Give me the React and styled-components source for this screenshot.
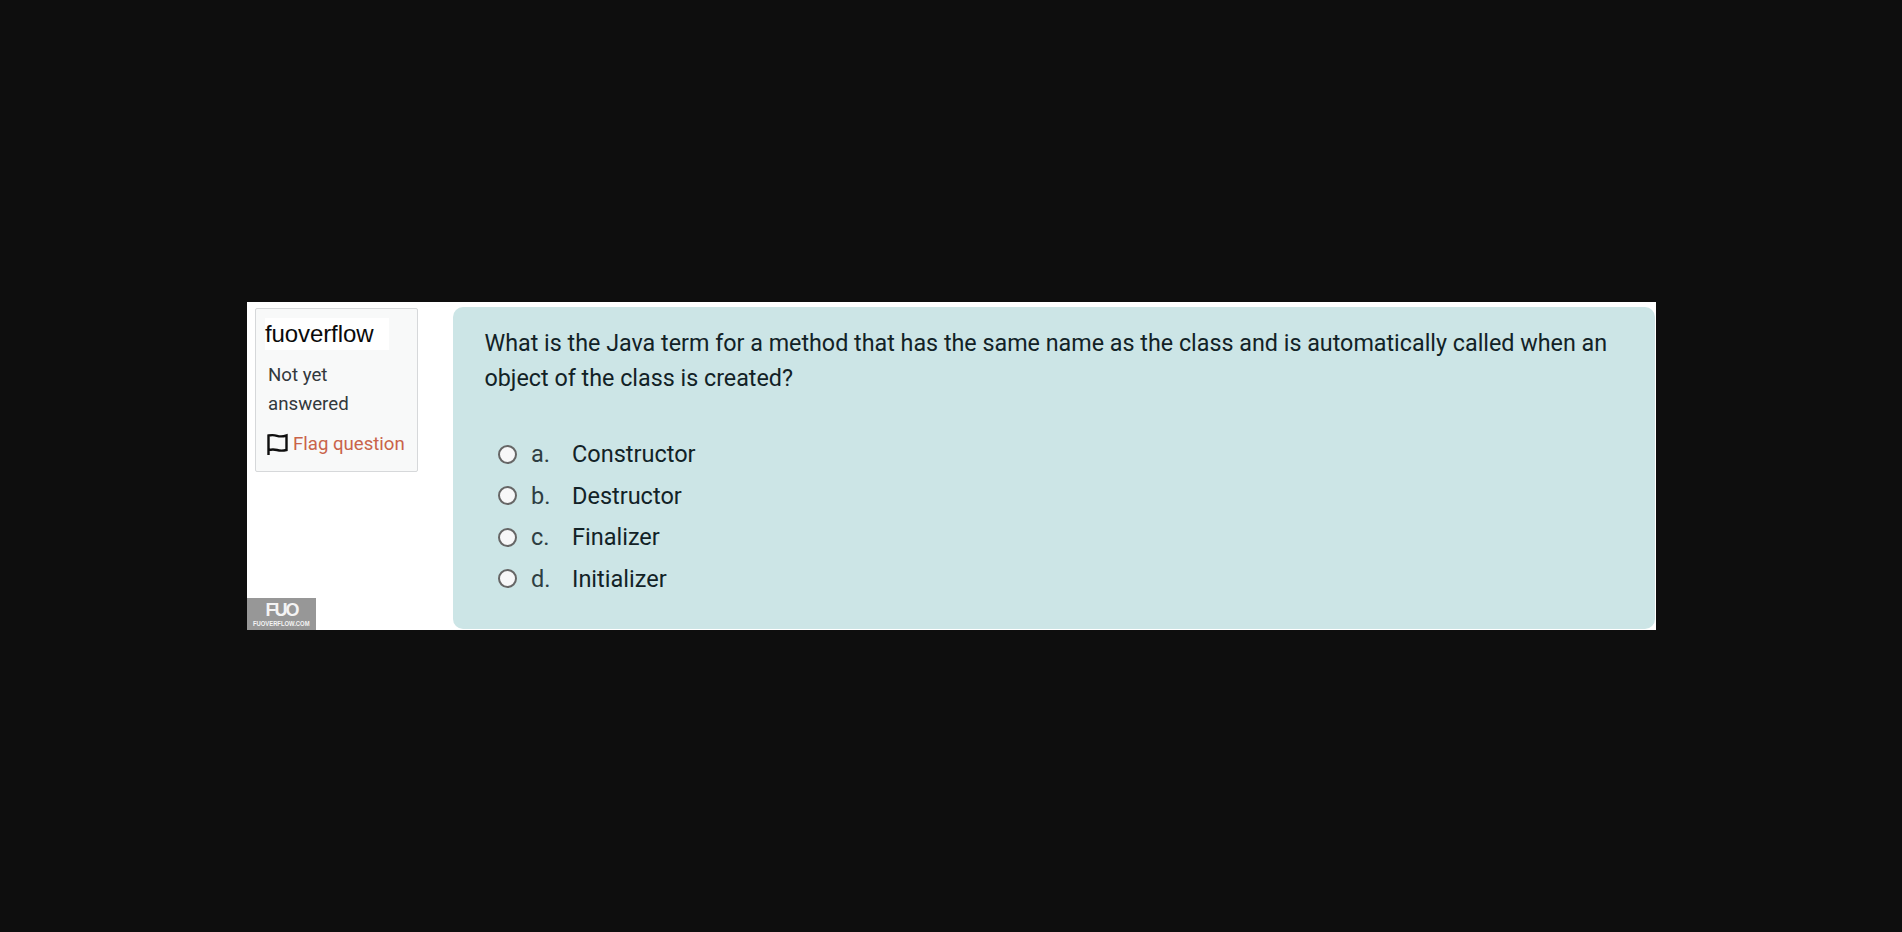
import React from "react";
import styled, { createGlobalStyle } from "styled-components";

const GlobalStyle = createGlobalStyle`
  html, body {
    margin: 0;
    padding: 0;
    height: 100%;
    background: #0e0e0e;
    font-family: Roboto, "Liberation Sans", sans-serif;
  }
`;

const Page = styled.div`
  width: 1902px;
  height: 932px;
  padding: 302px 0 0 247px;
  box-sizing: border-box;
  overflow: hidden;
`;

const Sheet = styled.div`
  position: relative;
  width: 1409px;
  height: 328px;
  background: #ffffff;
  display: flex;
  align-items: flex-start;
  box-sizing: border-box;
  padding: 5px 1px 1px 8px;
`;

const InfoBox = styled.div`
  width: 163px;
  height: 164px;
  margin-top: 1px;
  box-sizing: border-box;
  background: #f8f9f9;
  border: 1px solid #d6d8da;
  border-radius: 2px;
  padding: 9px 8px 7px 9px;
  flex-shrink: 0;
`;

const Username = styled.div`
  background: #ffffff;
  margin: 0 20px 0 0;
  font-family: "Liberation Sans", Arial, sans-serif;
  font-size: 24px;
  line-height: 32px;
  color: #0a0a0a;
  letter-spacing: -0.1px;
`;

const Status = styled.div`
  margin: 11px 0 0 3px;
  font-size: 18.7px;
  line-height: 28.5px;
  color: #33383c;
`;

const FlagRow = styled.div`
  display: flex;
  align-items: center;
  gap: 5px;
  margin: 12px 0 0 1px;
  font-size: 18.6px;
  line-height: 28px;
  color: #c9634a;
  white-space: nowrap;
`;

const FlagIcon = () => (
  <svg width="22" height="24" viewBox="0 0 22 24" fill="none" stroke="#0e0e0e" strokeWidth="2.4">
    <path d="M2.5 23V3.5C6 2.8 8.5 3 11 3.8C13.5 4.6 17 4.6 20.5 3.5V18C17 18.8 13.5 18.7 11 18C8.5 17.3 6 17.2 2.5 18" />
  </svg>
);

const QuestionPanel = styled.div`
  margin-left: 35px;
  flex: 1;
  height: 322px;
  background: #cce5e6;
  border-radius: 10px;
  box-sizing: border-box;
  padding: 19px 30px 0 31.5px;
  color: #122226;
`;

const QuestionText = styled.div`
  font-size: 23.3px;
  line-height: 35px;
`;

const Answers = styled.div`
  margin-top: 37.5px;
  margin-left: 13px;
  display: flex;
  flex-direction: column;
`;

const AnswerRow = styled.div`
  display: flex;
  align-items: center;
  height: 41.5px;
  font-size: 23.5px;
`;

const Radio = styled.span`
  width: 19px;
  height: 19px;
  box-sizing: border-box;
  border: 2px solid #666666;
  border-radius: 50%;
  background: #f7f7f8;
  margin-right: 14.5px;
  flex-shrink: 0;
`;

const Letter = styled.span`
  width: 41px;
  color: #2e3e42;
`;

const Watermark = styled.div`
  position: absolute;
  left: 0;
  bottom: 0;
  width: 69px;
  height: 32px;
  background: #979797;
  color: #f4f4f4;
  display: flex;
  flex-direction: column;
  align-items: center;
  overflow: hidden;
`;

const WatermarkLogo = styled.div`
  font-family: "Liberation Sans", Arial, sans-serif;
  font-weight: 700;
  font-size: 18px;
  line-height: 19px;
  margin-top: 3px;
  letter-spacing: -2px;
`;

const WatermarkSite = styled.div`
  font-family: "Liberation Sans", Arial, sans-serif;
  font-weight: 700;
  font-size: 7.5px;
  line-height: 8px;
  white-space: nowrap;
  transform: scaleX(0.78);
`;

const answers = [
  ["a.", "Constructor"],
  ["b.", "Destructor"],
  ["c.", "Finalizer"],
  ["d.", "Initializer"],
];

const App = () => {
  return (
    <Page>
      <GlobalStyle />
      <Sheet>
        <InfoBox>
          <Username>fuoverflow</Username>
          <Status>
            Not yet
            <br />
            answered
          </Status>
          <FlagRow>
            <FlagIcon />
            Flag question
          </FlagRow>
        </InfoBox>

        <QuestionPanel>
          <QuestionText>
            What is the Java term for a method that has the same name as the class and is automatically called when an
            object of the class is created?
          </QuestionText>
          <Answers>
            {answers.map(([letter, label]) => (
              <AnswerRow key={letter}>
                <Radio />
                <Letter>{letter}</Letter>
                {label}
              </AnswerRow>
            ))}
          </Answers>
        </QuestionPanel>

        <Watermark>
          <WatermarkLogo>FUO</WatermarkLogo>
          <WatermarkSite>FUOVERFLOW.COM</WatermarkSite>
        </Watermark>
      </Sheet>
    </Page>
  );
};

export default App;
